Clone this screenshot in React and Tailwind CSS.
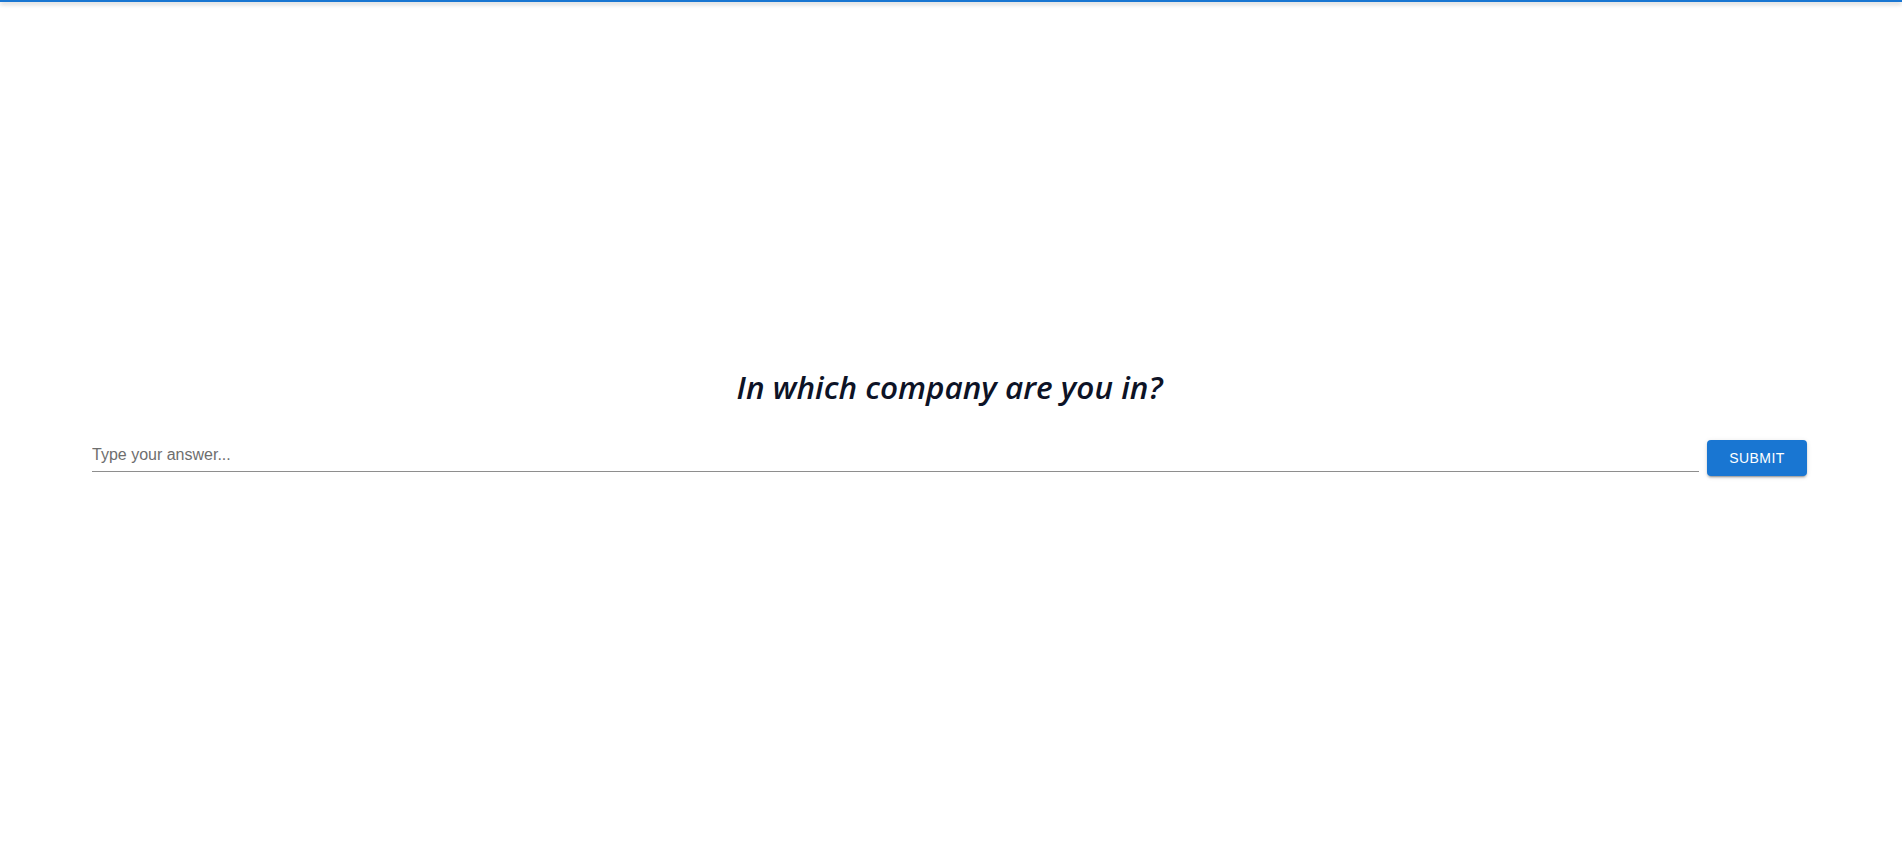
import React from "react";

export default function App() {
  return (
    <div className="relative min-h-screen w-full bg-white" style={{ fontFamily: "'Liberation Sans', Arial, sans-serif" }}>
      <div className="absolute left-0 right-0 top-0 h-[2px] bg-[#1976d2] shadow-[0_2px_4px_rgba(0,0,0,0.2),0_1px_6px_rgba(0,0,0,0.12)]" />
      <div className="flex min-h-screen flex-col justify-center pl-[92px] pr-[95px]">
        <h1 className="mb-[33px] text-center text-[31.5px] font-semibold italic leading-[40px] text-[#0d1326]" style={{ fontFamily: "'Open Sans', 'Noto Sans', sans-serif" }}>
          In which company are you in?
        </h1>
        <div className="flex items-start gap-[8px]">
          <div className="flex h-[32px] flex-1 items-center border-b border-[#8e8e8e]">
            <input
              type="text"
              placeholder="Type your answer..."
              className="w-full bg-transparent pt-[4px] pb-[5px] text-[16px] text-[#222] outline-none placeholder:text-[#6e6e6e]"
              style={{ fontFamily: "'Liberation Sans', Arial, sans-serif" }}
            />
          </div>
          <button
            className="h-[36px] w-[100px] rounded-[4px] bg-[#1976d2] text-[14px] font-normal uppercase tracking-[0.4px] text-white shadow-[0_3px_1px_-2px_rgba(0,0,0,0.2),0_2px_2px_0_rgba(0,0,0,0.14),0_1px_5px_0_rgba(0,0,0,0.12)]"
            style={{ fontFamily: "'Liberation Sans', Arial, sans-serif" }}
          >
            Submit
          </button>
        </div>
      </div>
    </div>
  );
}
